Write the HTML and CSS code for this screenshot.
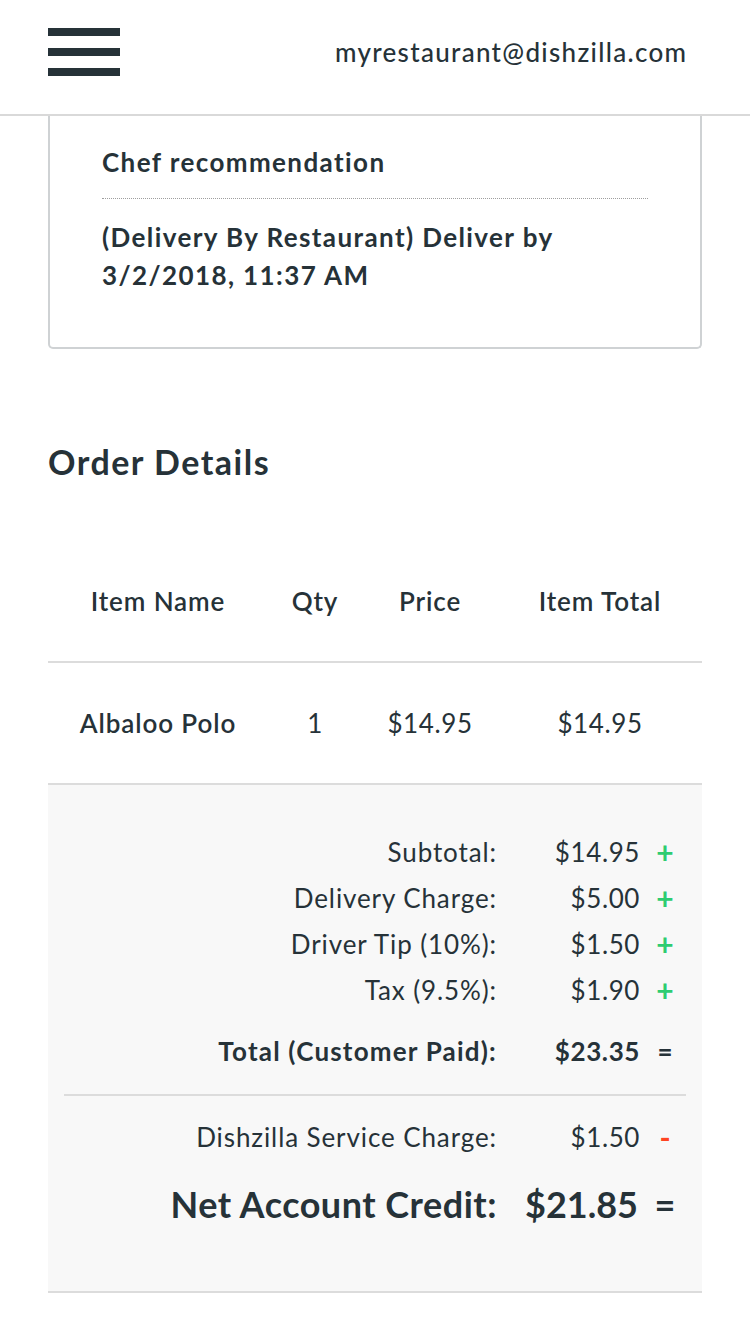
FILE: index.html
```html
<!DOCTYPE html>
<html lang="en">
<head>
<meta charset="utf-8">
<title>Order Details</title>
<link rel="stylesheet" href="styles.css">
</head>
<body>
<header class="topbar">
  <div class="burger" aria-label="Menu">
    <span class="bar"></span>
    <span class="bar"></span>
    <span class="bar"></span>
  </div>
  <div class="account">myrestaurant@dishzilla.com</div>
</header>

<main class="page">
  <section class="card">
    <div class="card-title">Chef recommendation</div>
    <div class="card-delivery">(Delivery By Restaurant) Deliver by 3/2/2018, 11:37 AM</div>
  </section>

  <h2 class="section-title">Order Details</h2>

  <div class="items">
    <div class="items-row items-head">
      <div class="cell">Item Name</div>
      <div class="cell">Qty</div>
      <div class="cell">Price</div>
      <div class="cell">Item Total</div>
    </div>
    <div class="items-row">
      <div class="cell cell-name">Albaloo Polo</div>
      <div class="cell cell-num">1</div>
      <div class="cell cell-num">$14.95</div>
      <div class="cell cell-num">$14.95</div>
    </div>
  </div>

  <div class="summary">
    <div class="sum-row">
      <div class="sum-label">Subtotal:</div>
      <div class="sum-value">$14.95</div>
      <div class="sum-sign plus">+</div>
    </div>
    <div class="sum-row">
      <div class="sum-label">Delivery Charge:</div>
      <div class="sum-value">$5.00</div>
      <div class="sum-sign plus">+</div>
    </div>
    <div class="sum-row">
      <div class="sum-label">Driver Tip (10%):</div>
      <div class="sum-value">$1.50</div>
      <div class="sum-sign plus">+</div>
    </div>
    <div class="sum-row">
      <div class="sum-label">Tax (9.5%):</div>
      <div class="sum-value">$1.90</div>
      <div class="sum-sign plus">+</div>
    </div>
    <div class="sum-row sum-total">
      <div class="sum-label">Total (Customer Paid):</div>
      <div class="sum-value">$23.35</div>
      <div class="sum-sign">=</div>
    </div>
    <div class="sum-divider"></div>
    <div class="sum-row">
      <div class="sum-label">Dishzilla Service Charge:</div>
      <div class="sum-value">$1.50</div>
      <div class="sum-sign minus">-</div>
    </div>
    <div class="sum-row sum-net">
      <div class="sum-label">Net Account Credit:</div>
      <div class="sum-value">$21.85</div>
      <div class="sum-sign">=</div>
    </div>
  </div>
</main>
</body>
</html>
```

FILE: styles.css
```css
* {
  box-sizing: border-box;
}

html, body {
  margin: 0;
  padding: 0;
  background: #ffffff;
}

body {
  font-family: Lato, "Open Sans", "Liberation Sans", sans-serif;
  color: #263238;
  width: 750px;
  height: 1334px;
  overflow: hidden;
}

/* Header */
.topbar {
  height: 116px;
  border-bottom: 2px solid #d9d9d9;
  display: flex;
  justify-content: space-between;
  align-items: flex-start;
  padding: 28px 64px 0 48px;
}

.burger {
  width: 72px;
  display: flex;
  flex-direction: column;
  gap: 12px;
}

.bar {
  display: block;
  height: 8px;
  background: #263238;
}

.account {
  font-size: 26px;
  line-height: 48px;
  font-weight: 500;
  letter-spacing: 1.3px;
  margin-right: -1.3px;
}

/* Card */
.page {
  padding: 0 48px;
}

.card {
  border: 2px solid #cfd2d4;
  border-top: none;
  border-radius: 0 0 5px 5px;
  padding: 27px 52px 53px;
}

.card-title {
  font-size: 26px;
  font-weight: 700;
  line-height: 38px;
  letter-spacing: 1.4px;
  padding-bottom: 17px;
  border-bottom: 1px dotted #9e9e9e;
}

.card-delivery {
  font-size: 26px;
  font-weight: 700;
  line-height: 38px;
  letter-spacing: 1.4px;
  margin-top: 19px;
}

/* Section title */
.section-title {
  margin: 93px 0 0;
  font-size: 34px;
  line-height: 40px;
  font-weight: 700;
  letter-spacing: 1.5px;
}

/* Items table */
.items {
  margin-top: 59px;
}

.items-row {
  display: grid;
  grid-template-columns: 220px 94px 136px 204px;
  border-bottom: 2px solid #dcdcdc;
}

.cell {
  height: 120px;
  display: flex;
  align-items: center;
  justify-content: center;
  font-size: 26px;
  font-weight: 400;
}

.items-head .cell {
  font-weight: 600;
  letter-spacing: 0.9px;
}

.cell-name {
  font-weight: 600;
  letter-spacing: 0.9px;
}

.cell-num {
  letter-spacing: 0.6px;
}

/* Summary */
.summary {
  background: #f8f8f8;
  border-bottom: 2px solid #dcdcdc;
  padding: 44px 0 62px;
}

.sum-row {
  display: grid;
  grid-template-columns: 1fr 143px 50px;
  padding-right: 12px;
  font-size: 26px;
  line-height: 46px;
}

.sum-label {
  text-align: right;
  letter-spacing: 0.9px;
}

.sum-value {
  text-align: right;
  letter-spacing: 0.6px;
}

.sum-sign {
  text-align: center;
  font-weight: 700;
}

.plus {
  color: #2ecc71;
  font-size: 30px;
}

.minus {
  color: #ff4422;
  font-size: 30px;
}

.sum-total {
  font-weight: 700;
  margin-top: 15px;
}

.sum-total .sum-label {
  letter-spacing: 1.2px;
}

.sum-divider {
  height: 2px;
  background: #dcdcdc;
  margin: 20px 16px 18px;
}

.sum-net {
  font-size: 36px;
  line-height: 50px;
  font-weight: 700;
  margin-top: 19px;
}

.sum-net .sum-label {
  letter-spacing: 0.5px;
}

.sum-net .sum-value {
  letter-spacing: 0;
  padding-right: 2px;
}
```
